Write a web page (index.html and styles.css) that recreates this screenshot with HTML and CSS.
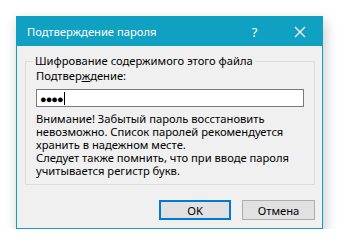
FILE: index.html
```html
<!DOCTYPE html>
<html lang="ru">
<head>
    <meta charset="UTF-8">
    <meta name="viewport" content="width=device-width, initial-scale=1.0">
    <title>Подтверждение пароля</title>
    <link rel="stylesheet" href="styles.css">
</head>
<body>
    <div class="window">
        <div class="titlebar">
            <span class="title">Подтверждение пароля</span>
            <span class="title-btn help">?</span>
            <span class="title-btn close">
                <svg width="12" height="12" viewBox="0 0 12 12">
                    <path d="M1 1 L11 11 M11 1 L1 11" stroke="#fff" stroke-width="1.2" fill="none"/>
                </svg>
            </span>
        </div>
        <div class="content">
            <fieldset class="group">
                <legend>Шифрование содержимого этого файла</legend>
                <label class="field-label" for="pwd">Подтвер<u>ж</u>дение:</label>
                <div class="input-box" id="pwd">
                    <span class="dots">●●●●</span><span class="caret"></span>
                </div>
                <p class="note">Внимание! Забытый пароль восстановить невозможно. Список паролей рекомендуется хранить в надежном месте.<br>Следует также помнить, что при вводе пароля учитывается регистр букв.</p>
            </fieldset>
            <div class="buttons">
                <button class="btn default">OK</button>
                <button class="btn">Отмена</button>
            </div>
        </div>
    </div>
</body>
</html>
```

FILE: styles.css
```css
:root {
    --accent: #0fa0c2;
    --face: #f0f0f0;
    --text: #000;
}

* {
    margin: 0;
    padding: 0;
    box-sizing: border-box;
}

body {
    background-color: #fff;
    padding: 16px 0 0 16px;
    font-family: 'Noto Sans', 'Open Sans', sans-serif;
    font-size: 11.2px;
    color: var(--text);
}

.window {
    width: 307px;
    height: 213px;
    border: 1px solid var(--accent);
    background-color: var(--face);
    box-shadow: 2px 5px 12px rgba(0, 0, 0, 0.22);
    display: flex;
    flex-direction: column;
}

.titlebar {
    height: 29px;
    background-color: var(--accent);
    color: #fff;
    display: flex;
    align-items: center;
    padding-left: 10px;
}

.title {
    flex-grow: 1;
    font-size: 11.2px;
}

.title-btn {
    width: 45px;
    display: flex;
    justify-content: center;
    align-items: center;
    font-size: 13px;
}

.group {
    margin: 8px 7px 0 8px;
    border: 1px solid #dcdcdc;
    padding: 0 10px 5px 10px;
    height: 131px;
}

.group legend {
    padding: 0 2px;
    margin-left: -3px;
    line-height: 14px;
}

.field-label {
    display: block;
    line-height: 14px;
    margin-top: 1px;
}

.input-box {
    height: 18px;
    margin-top: 6px;
    border: 1px solid #7a7a7a;
    background-color: #fff;
    display: flex;
    align-items: center;
    padding-left: 3px;
}

.dots {
    font-size: 11px;
    letter-spacing: -1px;
    line-height: 1;
}

.caret {
    width: 1px;
    height: 13px;
    background-color: #000;
    margin-left: 1px;
}

.note {
    margin-top: 5px;
    line-height: 13px;
}

.buttons {
    display: flex;
    justify-content: flex-end;
    gap: 11px;
    margin: 15px 7px 0 0;
}

.btn {
    width: 73px;
    height: 20px;
    background-color: #e1e1e1;
    border: 1px solid #adadad;
    font-family: inherit;
    font-size: 11.2px;
    color: var(--text);
}

.btn.default {
    border: 2px solid #0078d7;
    width: 72px;
}
```
